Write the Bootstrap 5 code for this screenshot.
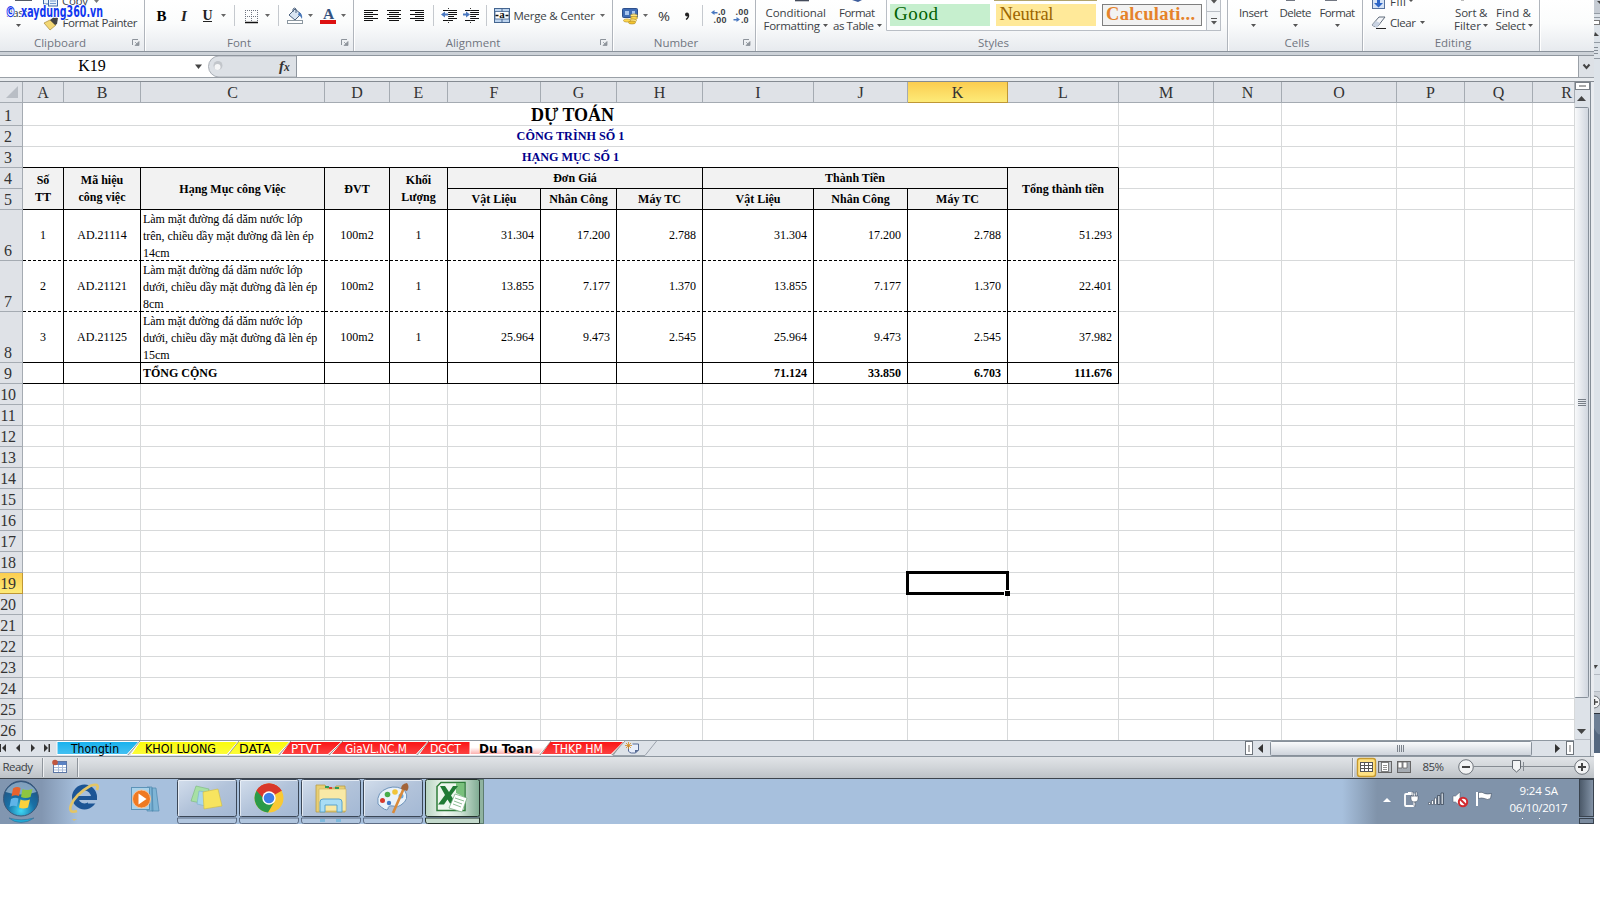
<!DOCTYPE html>
<html lang="vi">
<head>
  <meta charset="UTF-8" />
  <meta name="viewport" content="width=device-width, initial-scale=1.0"/>
  <title>Du Toan - Excel</title>
  <link href="https://cdn.jsdelivr.net/npm/bootstrap@5.3.0/dist/css/bootstrap.min.css" rel="stylesheet">
  <style>
    body { background: #fff; overflow: hidden; font: 11.5px/13px "Open Sans", "Noto Sans", sans-serif; color: #3b3f45; }
    svg { display: block; flex: none; }
    .desk { width: 1600px; height: 824px; }
    .app { width: 1594px; }
    .edge { width: 6px; height: 753px; }

    /* ribbon */
    .ribbon { height: 52px; background: linear-gradient(#fff, #fbfcfc 45%, #e7eaee); border-bottom: 1px solid #8a929b; }
    .rgroup { height: 51px; border-right: 1px solid #b0b5bc; box-shadow: 1px 0 #fff; }
    .rbody { height: 34px; }
    .rlabel { height: 17px; line-height: 17px; color: #70757f; }
    .g-clip { width: 145px; } .g-font { width: 209px; } .g-align { width: 259px; } .g-num { width: 143px; }
    .g-style { width: 472px; } .g-cells { width: 135px; } .g-edit { width: 177px; }
    svg text { font-family: "Open Sans", "Noto Sans", sans-serif; font-size: 11.5px; fill: #3b3f45; }
    svg .serif { font-family: "Liberation Serif", serif; }
    svg .tiny { font: bold 9px "Liberation Sans", sans-serif; }
    svg .brand { font: bold 16px "Liberation Sans Narrow", "DejaVu Sans Condensed", sans-serif; fill: #1238f0; stroke: #fff; stroke-width: 1.6px; paint-order: stroke; }
    svg .tabtxt { font-family: "DejaVu Sans Condensed", "DejaVu Sans", sans-serif; font-size: 12px; }

    /* formula bar */
    .gutter { height: 4px; background: #cdd2d8; border-bottom: 1px solid #8f969e; }
    .formula { height: 22px; border-bottom: 1px solid #9aa0a7; background: #fff; }
    .formula-name { width: 184px; padding-top: 1px; font: 16px/17px "Liberation Serif", serif; color: #000; }
    .formula-btn { width: 16px; background: #dde1e6; border-left: 1px solid #9aa0a7; }
    .gutter2 { height: 4px; background: #e8ebee; border-bottom: 1px solid #858b92; }

    /* sheet */
    .sheet-wrap { height: 659px; }
    .sheet { width: 1575px; table-layout: fixed; border-collapse: separate; border-spacing: 0; font: 12px/17px "Liberation Serif", serif; color: #000; }
    .sheet td, .sheet th { padding: 0; border: 0 solid #d7d9da; border-width: 0 1px 1px 0; vertical-align: middle; font-weight: normal; white-space: nowrap; position: relative; }
    .sheet td { padding-top: 2px; }
    .sheet th { background: #dfe2e7; border-color: #a5abb2; color: #333; font-size: 16px; line-height: 18px; text-align: center; }
    .sheet thead th { padding-top: 2px; }
    .sheet tbody th { vertical-align: bottom; padding-right: 6px; letter-spacing: -.2px; }
    .sheet th.hot { background: linear-gradient(#fbcd50, #fdeb78); border-color: #bf9735; }
    .sheet td.bk { border-color: #000; }
    .sheet td.ubk { border-bottom-color: #000; }
    .sheet td.dash { padding-top: 0; border-bottom: 0; background: repeating-linear-gradient(90deg, #000 0 3px, #fff 3px 5px) bottom / 100% 1px no-repeat; }
    .sheet td.hd { background: #f2f2f2; font-weight: bold; text-align: center; }
    .sheet td.num { text-align: right; padding-right: 6px; }
    .sheet td.mid { text-align: center; }
    .sheet td.wide { padding-top: 0; }
    .desc { height: 50px; padding: 1px 0 0 2px; letter-spacing: -.04px; }
    .total-label { padding-left: 2px; }
    .t1 { font-size: 18px; font-weight: bold; line-height: 20px; padding-left: 4px; }
    .sheet td.t2 { font-size: 12.2px; font-weight: bold; color: #00008b; }
    .pick { position: absolute; inset: -2px; border: 3px solid #000; z-index: 2; }
    .pick::after { content: ""; position: absolute; right: -4px; bottom: -4px; width: 6px; height: 6px; background: #000; border: solid #fff; border-width: 1px 0 0 1px; }
    .vbar { width: 20px; margin-left: -1px; }

    .tabs-bar { height: 17px; }
    .status { height: 22px; }
    .taskbar { height: 45px; }
  </style>
</head>
<body>
  <div class="desk d-flex">
    <div class="app d-flex flex-column">

      <div class="ribbon d-flex overflow-hidden">
        <div class="rgroup g-clip">
          <div class="rbody">
            <svg width="144" height="34" viewBox="0 0 144 34">
              <path d="M15 0h17" stroke="#555a66" stroke-width="2"/>
              <rect x="43.500" y="-4" width="8" height="8" fill="#eaf2fb" stroke="#3d67a8"/>
              <rect x="48.500" y="-3" width="9" height="9" fill="#eaf2fb" stroke="#3d67a8"/>
              <path d="M50 1h6M50 3.500h6" stroke="#6f97cf"/>
              <text x="62" y="5" textLength="26">Copy</text>
              <path d="M94 0h5l-2.500 3z" fill="#777"/>
              <text x="6" y="17" textLength="27">Paste</text>
              <path d="M16 24h5l-2.500 3z" fill="#555"/>
              <path d="M44 23l6-3 6 5-6 5z" fill="#f3d774" stroke="#a88a3a" stroke-width=".7"/>
              <path d="M50 20l4-3 4 1-1 6-2 1z" fill="#444"/>
              <text x="62.500" y="27" textLength="75">Format Painter</text>
              <text class="brand" x="5" y="17" textLength="11" lengthAdjust="spacingAndGlyphs">©</text>
              <text class="brand" x="21" y="17" textLength="82" lengthAdjust="spacingAndGlyphs">xaydung360.vn</text>
            </svg>
          </div>
          <div class="rlabel d-flex"><span class="flex-fill text-center">Clipboard</span><svg width="24" height="17" viewBox="0 0 24 17"><use href="#launch" x="12"/></svg></div>
        </div>
        <div class="rgroup g-font">
          <div class="rbody">
            <svg width="208" height="34" viewBox="145 0 208 34">
              <text class="serif" x="156.500" y="20.500" style="font-size:15px;font-weight:bold;fill:#000">B</text>
              <text class="serif" x="181" y="20.500" style="font-size:15px;font-weight:bold;font-style:italic;fill:#222">I</text>
              <text class="serif" x="202.500" y="20" style="font-size:14px;font-weight:bold;fill:#222">U</text>
              <path d="M203 21.500h9" stroke="#222"/>
              <path d="M221 14h5l-2.500 3zM265 14h5l-2.500 3zM308 14h5l-2.500 3zM341 14h5l-2.500 3z" fill="#666"/>
              <path d="M234.500 5v21M278.500 5v21" stroke="#c5c9ce"/>
              <path d="M245.500 10v12M251.500 10v12M257.500 10v12M245 10.500h13M245 16.500h13" stroke="#6e7480" stroke-dasharray="1 1"/>
              <path d="M245 22.500h13" stroke="#111" stroke-width="1.500"/>
              <path d="M289 15l6-6 6 5-6 6z" fill="#d9e5f2" stroke="#4c627e"/>
              <path d="M293 12v-3q2-2 3 0v4" fill="none" stroke="#4c627e"/>
              <path d="M299 12q4 2 3 7-1-3-4-4z" fill="#4a78b8"/>
              <rect x="287.500" y="20.500" width="15" height="3" fill="#fff" stroke="#8c97a0"/>
              <text class="serif" x="323" y="19" style="font-size:15.500px;font-weight:bold;fill:#33527f">A</text>
              <rect x="320" y="20" width="16" height="4" fill="#dd1111"/>
            </svg>
          </div>
          <div class="rlabel d-flex"><span class="flex-fill text-center">Font</span><svg width="20" height="17" viewBox="0 0 20 17"><use href="#launch" x="8"/></svg></div>
        </div>
        <div class="rgroup g-align">
          <div class="rbody">
            <svg width="258" height="34" viewBox="354 0 258 34">
              <path d="M364 10.500h14M364 12.500h9M364 14.500h14M364 16.500h9M364 18.500h14M364 20.500h9M387 10.500h14M389 12.500h10M387 14.500h14M389 16.500h10M387 18.500h14M389 20.500h10M410 10.500h14M415 12.500h9M410 14.500h14M415 16.500h9M410 18.500h14M415 20.500h9" stroke="#111" stroke-width="1.100"/>
              <path d="M433.500 5v21M486.500 5v21" stroke="#c5c9ce"/>
              <path d="M443 10.500h14M448 12.500h9M448 14.500h9M448 16.500h6M448 18.500h9M443 20.500h10M465 10.500h14M470 12.500h9M470 14.500h9M470 16.500h6M470 18.500h9M465 20.500h10" stroke="#111" stroke-width="1.200"/>
              <path d="M448.500 8v15M470.500 8v15" stroke="#333" stroke-dasharray="1 1"/>
              <path d="M441 14.500l4-3v2h3v2h-3v2zM470 14.500l-4-3v2h-3v2h3v2z" fill="#4a78c0"/>
              <rect x="494.500" y="8.500" width="15" height="14" fill="#bcd3ee" stroke="#44658f"/>
              <path d="M502 8v4M502 19v4" stroke="#44658f"/>
              <rect x="495" y="11.500" width="14" height="7.500" fill="#fff" stroke="#44658f" stroke-width=".8"/>
              <path d="M495.500 15.500h3M505.500 15.500h3" stroke="#111" stroke-width="1.500"/>
              <text x="499.300" y="18" class="serif" style="font-size:11px;font-weight:bold;fill:#111">a</text>
              <text x="513.500" y="20" textLength="81.500">Merge &amp; Center</text>
              <path d="M600 14h5l-2.500 3z" fill="#666"/>
            </svg>
          </div>
          <div class="rlabel d-flex"><span class="flex-fill text-center">Alignment</span><svg width="20" height="17" viewBox="0 0 20 17"><use href="#launch" x="8"/></svg></div>
        </div>
        <div class="rgroup g-num">
          <div class="rbody">
            <svg width="142" height="34" viewBox="613 0 142 34">
              <rect x="622.500" y="8.500" width="15" height="9" rx="1" fill="#3f6cb5" stroke="#2d4f8c"/>
              <path d="M625 11h4v4h-4zM632 11h3v3h-3z" fill="#a9c6ef"/>
              <ellipse cx="634" cy="15.500" rx="3.500" ry="1.600" fill="#ffe680" stroke="#a8862a" stroke-width=".6"/>
              <ellipse cx="634" cy="18" rx="3.500" ry="1.600" fill="#ffd84d" stroke="#a8862a" stroke-width=".6"/>
              <ellipse cx="633" cy="20.500" rx="3.500" ry="1.600" fill="#ffe680" stroke="#a8862a" stroke-width=".6"/>
              <ellipse cx="627" cy="20.500" rx="3.500" ry="1.600" fill="#ffd84d" stroke="#a8862a" stroke-width=".6"/>
              <ellipse cx="632" cy="22.500" rx="3.500" ry="1.500" fill="#f4c430" stroke="#a8862a" stroke-width=".6"/>
              <path d="M643 14h5l-2.500 3z" fill="#666"/>
              <text x="658" y="20.500" textLength="12" lengthAdjust="spacingAndGlyphs" style="font-size:13px;fill:#333">%</text>
              <circle cx="687" cy="14.500" r="2" fill="#222"/><path d="M688.500 14.500q.5 3-2.500 5" stroke="#222" stroke-width="1.300" fill="none"/>
              <path d="M702.500 5v21" stroke="#c5c9ce"/>
              <text class="tiny" x="718" y="15">.0</text><text class="tiny" x="713.500" y="22.500" textLength="13">.00</text>
              <text class="tiny" x="735.500" y="15" textLength="13">.00</text><text class="tiny" x="741" y="22.500">.0</text>
              <path d="M711 12.500l3.500-2.500v2h3v1.500h-3v1.500zM740 19.500l-3.500-2.500v2h-3v1.500h3v1.500z" fill="#4a78c0"/>
            </svg>
          </div>
          <div class="rlabel d-flex"><span class="flex-fill text-center ps-1">Number</span><svg width="20" height="17" viewBox="0 0 20 17"><use href="#launch" x="8"/></svg></div>
        </div>
        <div class="rgroup g-style">
          <div class="rbody">
            <svg width="471" height="34" viewBox="756 0 471 34">
              <rect x="795" y="0" width="14" height="1.300" fill="#444b5a"/><path d="M852 0h10l-4 2z" fill="#3d5c9c"/>
              <text x="765.500" y="17" textLength="60.500">Conditional</text>
              <text x="763.500" y="30" textLength="56.500">Formatting</text>
              <text x="839" y="17" textLength="36">Format</text>
              <text x="833" y="30" textLength="41">as Table</text>
              <path d="M823 24h5l-2.500 3zM877 24h5l-2.500 3z" fill="#555"/>
              <path d="M886.500 0v30.500h334v-30.500" fill="#fff" stroke="#b9bec5"/>
              <path d="M994 .5h103" stroke="#b0a36c"/>
              <rect x="890" y="4" width="100" height="22" fill="#c6efce"/>
              <rect x="996" y="4" width="100" height="22" fill="#ffe999"/>
              <rect x="1102.500" y="4.500" width="99" height="21" fill="#f2f2f2" stroke="#7f7f7f"/>
              <text class="serif" x="894" y="19.500" textLength="44" style="font-size:19px;fill:#006100">Good</text>
              <text class="serif" x="999.500" y="19.500" textLength="54" style="font-size:18.500px;fill:#9c6500">Neutral</text>
              <text class="serif" x="1106" y="19.500" textLength="89" style="font-size:18.500px;font-weight:bold;fill:#e5822a">Calculati...</text>
              <rect x="1206.500" y="-1" width="14" height="12.500" fill="#f3f5f7" stroke="#b9bec5"/>
              <rect x="1206.500" y="11.500" width="14" height="19" fill="#f3f5f7" stroke="#b9bec5"/>
              <path d="M1211 0h6l-3 3.500zM1211 21h6l-3 3.500z" fill="#555"/><path d="M1211 18.500h6" stroke="#555"/>
            </svg>
          </div>
          <div class="rlabel text-center ps-1">Styles</div>
        </div>
        <div class="rgroup g-cells">
          <div class="rbody">
            <svg width="134" height="34" viewBox="1228 0 134 34">
              <path d="M1286 0h9M1325 0h12" stroke="#444b5a" stroke-width="1.500"/>
              <text x="1239" y="17" textLength="29">Insert</text>
              <text x="1279.500" y="17" textLength="32">Delete</text>
              <text x="1319.500" y="17" textLength="35.500">Format</text>
              <path d="M1251 24h5l-2.500 3zM1293 24h5l-2.500 3zM1335 24h5l-2.500 3z" fill="#555"/>
            </svg>
          </div>
          <div class="rlabel text-center ps-1">Cells</div>
        </div>
        <div class="rgroup g-edit">
          <div class="rbody">
            <svg width="176" height="34" viewBox="1363 0 176 34">
              <rect x="1372.500" y="-4" width="12" height="12.500" fill="#d5e3f6" stroke="#55729f"/>
              <path d="M1377 0h3v3h3l-4.500 4.500-4.500-4.500h3z" fill="#2d66c8"/>
              <text x="1390" y="6" textLength="16">Fill</text><path d="M1409 0h4l-2 2z" fill="#555"/>
              <path d="M1372 25l7-8h6l-7 9q-3 2-6-1z" fill="#f4f6f9" stroke="#5f6b7a"/><path d="M1372 25l4-4 4 2-3 5z" fill="#c9d3e2"/>
              <path d="M1376 28.500h10" stroke="#222"/>
              <text x="1390" y="27" textLength="26">Clear</text><path d="M1420 21h5l-2.500 3z" fill="#555"/>
              <path d="M1461 0h3" stroke="#777"/>
              <text x="1455" y="17" textLength="32.500">Sort &amp;</text><text x="1454" y="30" textLength="27">Filter</text><path d="M1483 24h5l-2.500 3z" fill="#555"/>
              <text x="1496" y="17" textLength="35">Find &amp;</text><text x="1495.500" y="30" textLength="30">Select</text><path d="M1528 24h5l-2.500 3z" fill="#555"/>
            </svg>
          </div>
          <div class="rlabel text-center ps-1">Editing</div>
        </div>
      </div>
      <div class="gutter"></div>

      <div class="formula d-flex">
        <div class="formula-name text-center">K19</div>
        <svg width="113" height="21" viewBox="184 56 113 21">
          <path d="M195 64.500h7l-3.500 4.500z" fill="#444"/>
          <path d="M297 56h-78a10.500 10.500 0 0 0 0 21h78z" fill="#dde1e6" stroke="#a9aeb5"/>
          <circle cx="218" cy="65.500" r="4.500" fill="#c2c6cb"/><circle cx="217.500" cy="67" r="3" fill="#f5f6f7"/>
          <text class="serif" x="279" y="71" style="font-size:15px;font-style:italic;font-weight:bold;fill:#333">f</text>
          <text class="serif" x="284" y="71" style="font-size:11.500px;font-style:italic;font-weight:bold;fill:#333">x</text>
          <path d="M296.500 56v21" stroke="#8f969e"/>
        </svg>
        <div class="flex-fill"></div>
        <div class="formula-btn">
          <svg width="15" height="21" viewBox="0 0 15 21"><path d="M4.500 8.500l3 3.500 3-3.500" fill="none" stroke="#444" stroke-width="2"/></svg>
        </div>
      </div>
      <div class="gutter2"></div>

      <div class="sheet-wrap d-flex overflow-hidden">
        <table class="sheet flex-shrink-0">
          <colgroup id="cols"></colgroup>
          <thead><tr id="colHeads"></tr></thead>
          <tbody id="rows"></tbody>
        </table>
        <svg class="vbar" width="20" height="659" viewBox="1574 82 20 659">
          <defs>
            <linearGradient id="vg"><stop offset="0" stop-color="#fafbfc"/><stop offset="1" stop-color="#cfd5de"/></linearGradient>
          </defs>
          <rect x="1574" y="82" width="20" height="659" fill="#dde2e8"/>
          <rect x="1575.500" y="82.500" width="14" height="7" fill="#fff" stroke="#7a8087"/><path d="M1579 86h7" stroke="#555"/>
          <path d="M1577 101h9l-4.500-5z" fill="#444"/>
          <rect x="1574.500" y="107.500" width="14" height="590" rx="1" fill="url(#vg)" stroke="#87909a"/>
          <path d="M1578 399.500h8M1578 401.500h8M1578 403.500h8M1578 405.500h8" stroke="#777e87"/>
          <path d="M1577 729h9l-4.500 5z" fill="#444"/>
          <path d="M1574 739.500h16" stroke="#b7bcc3"/>
          <path d="M1590.500 82v659" stroke="#858e97"/><rect x="1591" y="82" width="3" height="659" fill="#e9ecf0"/>
        </svg>
      </div>

      <div class="tabs-bar d-flex">
        <svg id="tabs" width="660" height="17" viewBox="0 740 660 17"></svg>
        <svg width="934" height="17" viewBox="660 740 934 17">
          <defs><linearGradient id="hg" x2="0" y2="1"><stop offset="0" stop-color="#fbfcfd"/><stop offset="1" stop-color="#ccd2da"/></linearGradient></defs>
          <rect x="660" y="740" width="934" height="17" fill="#dde2e8"/>
          <path d="M660 740.500h914M660 756.500h934" stroke="#8f98a1"/>
          <rect x="1245.500" y="741.500" width="7" height="13" fill="#fff" stroke="#6e757c"/><path d="M1249 745v7" stroke="#666"/>
          <path d="M1263 744v9l-5-4.500z" fill="#333"/>
          <rect x="1270.500" y="741.500" width="261" height="14" rx="1" fill="url(#hg)" stroke="#87909a"/>
          <path d="M1397.500 745v7M1399.500 745v7M1401.500 745v7M1403.500 745v7" stroke="#7c838c"/>
          <path d="M1555 744v9l5-4.500z" fill="#333"/>
          <rect x="1566.500" y="741.500" width="7" height="13" fill="#fff" stroke="#6e757c"/><path d="M1570 745v7" stroke="#666"/>
          <path d="M1590.500 740v17" stroke="#858e97"/>
        </svg>
      </div>

      <div class="status">
        <svg width="1594" height="22" viewBox="0 757 1594 22">
          <defs><linearGradient id="sg" x2="0" y2="1"><stop offset="0" stop-color="#e1e4e7"/><stop offset=".5" stop-color="#d0d4d8"/><stop offset="1" stop-color="#bbc0c5"/></linearGradient></defs>
          <rect x="0" y="757" width="1594" height="22" fill="url(#sg)"/>
          <text x="2.500" y="771" textLength="30.500">Ready</text>
          <path d="M42.500 758v19M77.500 758v19M1352.500 758v19" stroke="#8f959c"/><path d="M43.500 758v19M78.500 758v19M1353.500 758v19" stroke="#eef0f2"/>
          <rect x="53.500" y="761.500" width="13" height="11" fill="#fff" stroke="#5b76a5"/><rect x="54" y="762" width="12" height="3" fill="#5a82c4"/>
          <path d="M54 767.500h12M54 770h12M58.500 765v7M62.500 765v7" stroke="#a9bcd9"/><circle cx="55" cy="762.500" r="2.800" fill="#c0563f"/>
          <rect x="1357.500" y="758.500" width="18" height="18" rx="2.500" fill="#ffe283" stroke="#c79a2e" stroke-width="1.400"/>
          <rect x="1360.500" y="762.500" width="12" height="9" fill="#fff" stroke="#555"/><path d="M1361 765.500h12M1361 768.500h12M1364.500 763v9M1368.500 763v9" stroke="#555"/>
          <rect x="1378.500" y="761.500" width="13" height="11" fill="#bfc4ca" stroke="#666"/><rect x="1381.500" y="762.500" width="7" height="9" fill="#fff" stroke="#666" stroke-width=".8"/><path d="M1383 765.500h4M1383 767.500h4M1383 769.500h4" stroke="#777" stroke-width=".8"/>
          <rect x="1397.500" y="761.500" width="13" height="11" fill="#a5abb2" stroke="#666"/><path d="M1398 762h4v6h-4zM1403 762h4v6h-4z" fill="#fff" stroke="#666" stroke-width=".8"/>
          <text x="1422.500" y="771" textLength="21.500">85%</text>
          <path d="M1474 766.500h100M1523.500 762v9" stroke="#868c93"/>
          <circle cx="1466" cy="767" r="7.300" fill="#f2f3f4" stroke="#6c7279"/><path d="M1462 767h8" stroke="#444" stroke-width="2"/>
          <circle cx="1582" cy="767" r="7.300" fill="#f2f3f4" stroke="#6c7279"/><path d="M1578 767h8M1582 763v8" stroke="#444" stroke-width="2"/>
          <path d="M1512.500 760.500h8v8l-4 3.500-4-3.500z" fill="#f3f4f5" stroke="#60666d"/>
          <path d="M0 778.500h1594" stroke="#3d444d"/>
        </svg>
      </div>

      <div class="taskbar">
        <svg width="1594" height="45" viewBox="0 779 1594 45">
          <defs>
            <linearGradient id="tb" gradientUnits="userSpaceOnUse" x1="0" x2="1594" y1="0" y2="0">
              <stop offset="0" stop-color="#8196b0"/><stop offset=".026" stop-color="#8296b1"/><stop offset=".049" stop-color="#a7c0dd"/>
              <stop offset=".842" stop-color="#a7c0dd"/><stop offset=".864" stop-color="#8093aa"/><stop offset="1" stop-color="#8093aa"/>
            </linearGradient>
            <linearGradient id="bt" x2="1" y2="1"><stop offset="0" stop-color="#d3deec"/><stop offset=".5" stop-color="#b2c3da"/><stop offset="1" stop-color="#a3b8d4"/></linearGradient>
            <linearGradient id="xl" x2="1" y2="0"><stop offset="0" stop-color="#b9d5c2"/><stop offset=".35" stop-color="#eef6ef"/><stop offset=".65" stop-color="#cfe3d6"/><stop offset="1" stop-color="#7fab92"/></linearGradient>
            <radialGradient id="orb" cx=".5" cy=".85" r=".85"><stop offset="0" stop-color="#3fd8f4"/><stop offset=".45" stop-color="#1870a6"/><stop offset="1" stop-color="#264d78"/></radialGradient>
            <linearGradient id="sd"><stop offset="0" stop-color="#4a5868"/><stop offset="1" stop-color="#8494a8"/></linearGradient>
          </defs>
          <rect x="0" y="779" width="1594" height="45" fill="url(#tb)"/>
          <!-- start orb -->
          <circle cx="21" cy="798.500" r="17.500" fill="url(#orb)" stroke="#3c5878"/>
          <path d="M5.500 792a17 17 0 0 1 31 0q-15 5-31 0z" fill="#cfe0ee" opacity=".55"/>
          <path d="M13 788.500q4-2.500 7.500-.5l-1.500 8q-4-1.500-7.500.5z" fill="#e8622c"/>
          <path d="M22.500 789q4 2 10 0l-2 8q-5 2-9.500 0z" fill="#8ec63f"/>
          <path d="M11 799q4-2 7.500-.5l-1.500 8q-4-1.500-7.500.5z" fill="#5fb4e8"/>
          <path d="M20.500 799.500q4 2 9.500 0l-2 8q-5 2-9 0z" fill="#fbd13c"/>
          <path d="M9 818q12 3.500 25 0-6 4.500-13 4.500t-12-4.500z" fill="#20a9d6" stroke="#3c6c90" stroke-width=".6"/>
          <!-- internet explorer -->
          <circle cx="84.500" cy="797" r="9.500" fill="none" stroke="#1c5595" stroke-width="6"/>
          <path d="M76 796h21v4h-21z" fill="#1c5595"/><path d="M88 800h12v3.500h-12z" fill="#a7c0dd"/>
          <path d="M80.500 795q4-4.500 8 0z" fill="#a7c0dd"/>
          <path d="M97 790q3-8-7-4-14 8-19 19-3 9 6 6" fill="none" stroke="#e3c566" stroke-width="2.600"/>
          <path d="M72 819h5l-3 2z" fill="#d5c07a"/>
          <!-- media player -->
          <path d="M152 788h4l3 23h-7zM147 787h5l1 24h-6z" fill="#7fb5d6" stroke="#4d87ad" stroke-width=".7"/>
          <rect x="131.500" y="787.500" width="18" height="22" fill="#a9d2ea" stroke="#5c93b8"/>
          <circle cx="141.500" cy="799" r="9" fill="#ef7a22" stroke="#f6c49a"/><path d="M138.500 793.500v11l8-5.500z" fill="#fff"/>
          <!-- running apps -->
          <g fill="url(#bt)" stroke="#3b4757">
            <rect x="177.500" y="779.500" width="59" height="37" rx="2"/><rect x="239.500" y="779.500" width="59" height="37" rx="2"/>
            <rect x="301.500" y="779.500" width="59" height="37" rx="2"/><rect x="363.500" y="779.500" width="59" height="37" rx="2"/>
          </g>
          <path d="M177.500 818v3q0 2.500 2 2.500h55q2 0 2-2.500v-3zM239.500 818v3q0 2.500 2 2.500h55q2 0 2-2.500v-3zM301.500 818v3q0 2.500 2 2.500h55q2 0 2-2.500v-3zM363.500 818v3q0 2.500 2 2.500h55q2 0 2-2.500v-3z" fill="#b1c6df" stroke="#55637a" stroke-width=".9"/>
          <path d="M178.500 816v-35.500h57M240.500 816v-35.500h57M302.500 816v-35.500h57M364.500 816v-35.500h57" fill="none" stroke="#eef3f9" opacity=".8"/>
          <rect x="479.500" y="779.500" width="4" height="44" fill="#8fb39f" stroke="#5d7d70"/>
          <rect x="425.500" y="779.500" width="54" height="37" rx="2" fill="url(#xl)" stroke="#25332c"/>
          <path d="M425.500 818v3q0 2.500 2 2.500h52v-5.500z" fill="#c4dacd" stroke="#25332c"/>
          <!-- sticky notes -->
          <path d="M196 786l13 3-3 15-15-3z" fill="#a7e0a5" stroke="#78b878" stroke-width=".6"/>
          <path d="M199 791l14 2-3 14-13-3z" fill="#a8d6ee" stroke="#7ab0cc" stroke-width=".6"/>
          <path d="M203 792l15-3 4 17-18 3z" fill="#f7e45f" stroke="#cdbb45" stroke-width=".6"/>
          <!-- chrome -->
          <circle cx="269" cy="798" r="14.500" fill="#f9c934"/>
          <path d="M269 798l-12.500-7.300a14.500 14.500 0 0 1 25.100 0z" fill="#d9382b"/>
          <path d="M269 791h12.700a14.500 14.500 0 0 0-25.200-.3l6.500 10.500z" fill="#d9382b"/>
          <path d="M256.500 790.700a14.500 14.500 0 0 0 11.500 21.800l6.500-11-5.500 3z" fill="#2b9a48"/>
          <circle cx="269" cy="798" r="6.700" fill="#fff"/><circle cx="269" cy="798" r="5.300" fill="#3c7ee8"/>
          <!-- explorer -->
          <path d="M316 785h9l2 3h8l1-2h9v26h-29z" fill="#e8cf74" stroke="#b89c48" stroke-width=".8"/>
          <path d="M319 789h27v22h-27z" fill="#f8e9a6" stroke="#c9b060" stroke-width=".6"/>
          <path d="M325 787h4M335 788h4" stroke="#2e9a58" stroke-width="2"/><path d="M329 788h3" stroke="#d8452f" stroke-width="2"/>
          <path d="M320 812v-10q0-3 3-3h16q3 0 3 3v10h-5v-7h-12v7z" fill="#a9ddf5" stroke="#5ba3cb"/>
          <path d="M320 819h5v3h-5zM336 819h5v3h-5z" fill="#7fb9dc"/>
          <!-- paint -->
          <path d="M378 804q-2-12 10-16 10-3 17 3 5 8-4 14-3 3-8 1-5-1-5 3-2 3-10-5z" fill="#eaf2fa" stroke="#6d93ba"/>
          <circle cx="382.500" cy="800.500" r="2.500" fill="#d8392d"/><circle cx="387.500" cy="794.500" r="2.800" fill="#49ac4a"/><circle cx="395" cy="792" r="2.800" fill="#f1c53a"/><circle cx="401" cy="796" r="2.500" fill="#67a8e0"/><circle cx="389" cy="803" r="2.200" fill="#3f79c8"/>
          <path d="M404 788l-11 25" stroke="#d98a3a" stroke-width="2.600"/><path d="M401 789q0-5 6-6 3 4 0 8z" fill="#a2643a"/>
          <!-- excel -->
          <path d="M441 782.500h24v28h-28v-24z" fill="#eef7ee" stroke="#2f7d3a" stroke-width="1.500"/>
          <path d="M456 783h8v14l-8-4z" fill="#79c07c"/>
          <path d="M440 786h5l4 6 4-6h5l-7 9.500 5 8h-6l-2.500-4-3.500 5h-6l7-9.500z" fill="#217a35"/>
          <path d="M455 794l12 4-5 14-13-4z" fill="#fff" stroke="#6fa77a" stroke-width=".7"/><path d="M455 798l9 3M454 801l8 3M453 804l8 3" stroke="#8dbd95"/>
          <!-- tray -->
          <path d="M1383 802h8l-4-4z" fill="#fff"/>
          <rect x="1405" y="794" width="9" height="12" rx="1" fill="#7f8fa4" stroke="#fff" stroke-width="1.800"/><path d="M1408 792h4v2h-4z" fill="#fff"/>
          <path d="M1411 796h7v3q0 3-3.500 3t-3.500-3zM1412 792h1.500v4h-1.500zM1415.500 792h1.500v4h-1.500zM1414 802h1.500v4h-1.500z" fill="#fff" stroke="#3c4a5c" stroke-width=".5"/>
          <path d="M1428.500 802.500h2v2h-2zM1431.500 800.500h2v4h-2zM1434.500 798h2v6.500h-2z" fill="#fff" stroke="#3c4a5c" stroke-width=".6"/>
          <path d="M1437.500 795.500h2.500v9h-2.500zM1441 793h2.500v11.500h-2.500z" fill="#c3cbd4" stroke="#3c4a5c" stroke-width=".8"/>
          <path d="M1453 796h2.500l4.500-4v14l-4.500-4h-2.500z" fill="#fff" stroke="#4c596a" stroke-width=".5"/>
          <circle cx="1463" cy="802" r="4.200" fill="#fff" stroke="#d22a2f" stroke-width="2"/><path d="M1460 799l6 6" stroke="#d22a2f" stroke-width="2"/>
          <path d="M1477 792v14" stroke="#fff" stroke-width="2"/><path d="M1478.500 792.500q4-1 6 1 3 1 7 0l-1 5q-3 2-6 0-3-1-6 0z" fill="#fff" stroke="#3c4a5c" stroke-width=".6"/>
          <text x="1519.500" y="795" textLength="38.500" style="fill:#fff">9:24 SA</text>
          <text x="1509.500" y="811.500" textLength="58" style="fill:#fff">06/10/2017</text>
          <path d="M1522 818h1v1h-1zM1539 818h1v1h-1z" fill="#fff"/>
          <rect x="1579.500" y="779.500" width="14" height="37" fill="url(#sd)" stroke="#39434f"/><rect x="1579.500" y="818.500" width="14" height="5" fill="#7b8b9f" stroke="#39434f"/>
        </svg>
      </div>
    </div>

    <svg class="edge" width="6" height="753" viewBox="1594 0 6 753">
      <rect x="1594" y="0" width="6" height="753" fill="#dde3e9"/>
      <rect x="1594" y="0" width="6" height="13" fill="#c6ccd4"/><path d="M1597 1l3 3v-3z" fill="#444"/>
      <path d="M1594 13.500h6M1594 17.500h6M1594 42.500h6M1594 58.500h6" stroke="#939ba4"/>
      <rect x="1593.500" y="20.500" width="6" height="4" fill="#fff" stroke="#777"/><path d="M1594 36h5l-4-4z" fill="#444"/>
      <path d="M1594 47.500h4M1594 50.500h4M1594 53.500h4" stroke="#848c95"/>
      <path d="M1594 665h4l-3 4z" fill="#444"/><path d="M1594 674.500h6M1594 691.500h6" stroke="#b4bac2"/>
      <rect x="1594" y="692" width="6" height="21" fill="#cdd2d8"/><circle cx="1594" cy="702" r="6" fill="#f2f3f4" stroke="#6c7279"/><path d="M1594 702h4M1594.500 699v6" stroke="#444" stroke-width="1.500"/>
      <rect x="1594" y="713" width="6" height="40" fill="#6d7f95"/><path d="M1594 713.500h6" stroke="#2c333c"/><path d="M1594 728q4 8 6 6v19h-6z" fill="#54677f"/>
    </svg>
  </div>

  <svg width="0" height="0">
    <symbol id="launch" width="8" height="17" viewBox="0 0 8 17"><path d="M.5 11V5.500H6" fill="none" stroke="#8d939b"/><path d="M3 8l3 3M7 7.500v4h-4z" stroke="#8d939b" fill="#8d939b" stroke-width=".8"/></symbol>
  </svg>

  <script src="https://cdn.jsdelivr.net/npm/bootstrap@5.3.0/dist/js/bootstrap.bundle.min.js"></script>
  <script>
    const widths = [41, 77, 184, 65, 58, 93, 76, 86, 111, 94, 100, 111, 95, 68, 115, 68, 68, 42];
    const letters = 'ABCDEFGHIJKLMNOPQR'.split('');
    const items = [
      ['1', 'AD.21114', 'Làm mặt đường đá dăm nước lớp<br>trên, chiều dầy mặt đường đã lèn ép<br>14cm', '100m2', '1', '31.304', '17.200', '2.788', '31.304', '17.200', '2.788', '51.293'],
      ['2', 'AD.21121', 'Làm mặt đường đá dăm nước lớp<br>dưới, chiều dầy mặt đường đã lèn ép<br>8cm', '100m2', '1', '13.855', '7.177', '1.370', '13.855', '7.177', '1.370', '22.401'],
      ['3', 'AD.21125', 'Làm mặt đường đá dăm nước lớp<br>dưới, chiều dầy mặt đường đã lèn ép<br>15cm', '100m2', '1', '25.964', '9.473', '2.545', '25.964', '9.473', '2.545', '37.982']
    ];
    const totals = ['', '', 'TỔNG CỘNG', '', '', '', '', '', '71.124', '33.850', '6.703', '111.676'];

    document.getElementById('cols').innerHTML = '<col style="width:23px">' + widths.map(w => `<col style="width:${w}px">`).join('');
    document.getElementById('colHeads').innerHTML =
      '<th style="height:21px"><svg width="22" height="18"><path d="M18 2v12H6z" fill="#b9bec5"/></svg></th>' +
      letters.map(l => `<th class="${l === 'K' ? 'hot' : ''}${l === 'R' ? ' text-end' : ''}"${l === 'R' ? ' style="padding-right:2px"' : ''}>${l}</th>`).join('');

    const rows = document.getElementById('rows');
    const blanks = n => '<td></td>'.repeat(n);
    function addRow(n, height, cells) {
      rows.insertAdjacentHTML('beforeend', `<tr style="height:${height}px"><th class="${n === 19 ? 'hot' : ''}">${n}</th>${cells}</tr>`);
    }
    const hd = (text, attrs) => `<td class="bk hd" ${attrs || ''}>${text}</td>`;

    addRow(1, 23, '<td colspan="12" class="mid"><div class="t1">DỰ TOÁN</div></td>' + blanks(6));
    addRow(2, 21, '<td colspan="12" class="mid t2">CÔNG TRÌNH SỐ 1</td>' + blanks(6));
    addRow(3, 21, '<td colspan="12" class="mid t2 ubk">HẠNG MỤC SỐ 1</td>' + blanks(6));
    addRow(4, 21, hd('Số<br>TT', 'rowspan="2"') + hd('Mã hiệu<br>công việc', 'rowspan="2"') + hd('Hạng Mục công Việc', 'rowspan="2"') +
      hd('ĐVT', 'rowspan="2"') + hd('Khối<br>Lượng', 'rowspan="2"') + hd('Đơn Giá', 'colspan="3"') + hd('Thành Tiền', 'colspan="3"') +
      hd('Tổng thành tiền', 'rowspan="2"') + blanks(6));
    addRow(5, 21, ['Vật Liệu', 'Nhân Công', 'Máy TC', 'Vật Liệu', 'Nhân Công', 'Máy TC'].map(t => hd(t)).join('') + blanks(6));
    items.forEach((item, i) => {
      const cells = item.map((v, c) => {
        const cls = 'bk' + (i < 2 ? ' dash' : '') + (c > 4 ? ' num' : c === 2 ? ' wide' : ' mid');
        return `<td class="${cls}">${c === 2 ? `<div class="desc">${v}</div>` : v}</td>`;
      }).join('');
      addRow(6 + i, 51, cells + blanks(6));
    });
    addRow(9, 21, totals.map((v, c) => `<td class="bk fw-bold ${c > 4 ? 'num' : ''}">${c === 2 ? `<div class="total-label">${v}</div>` : v}</td>`).join('') + blanks(6));
    for (let n = 10; n <= 26; n++) {
      addRow(n, 21, n === 19 ? blanks(10) + '<td><div class="pick"></div></td>' + blanks(7) : blanks(18));
    }

    // sheet tabs: label, fill, text colour, left bottom, left top, right top, right bottom, text x, text width
    const tabs = [
      ['THKP HM', '#fb1414', '#fff', 541, 550, 624, 611, 553, 50],
      ['DGCT', '#fb1414', '#fff', 419, 428, 480, 470, 430, 31],
      ['GiaVL.NC.M', '#fb1414', '#fff', 331, 342, 428, 416, 345, 62],
      ['PTVT', '#fb1414', '#fff', 281, 290, 342, 328, 291, 30],
      ['DATA', '#fbfb0a', '#000', 228, 238, 290, 278, 239, 32],
      ['KHOI LUONG', '#fbfb0a', '#000', 131, 140, 238, 227, 145, 71],
      ['Thongtin', '#17b1ee', '#000', 57, 57, 139, 127, 71, 48],
      ['Du Toan', 'url(#active)', '#000', 470, 470, 550, 539, 479, 54]
    ];
    let out = `<defs><linearGradient id="active" x2="0" y2="1"><stop offset="0" stop-color="#fff"/><stop offset=".45" stop-color="#fff"/><stop offset="1" stop-color="#fbaaa8"/></linearGradient>
      <linearGradient id="shine" x2="0" y2="1"><stop offset="0" stop-color="#fff" stop-opacity="0"/><stop offset="1" stop-color="#fff" stop-opacity=".2"/></linearGradient></defs>
      <rect x="0" y="740" width="660" height="17" fill="#dde2e8"/>
      <path d="M0 740.500h660M0 756.500h660" stroke="#8f98a1"/>
      <path d="M0 744h1v8H0zM6 744v8l-4-4zM20 744v8l-4-4zM31 744v8l4-4zM44 744v8l4-4zM48.500 744h1.500v8h-1.500z" fill="#333"/>
      <path d="M613 755.500l10-14M645 755.500l12-15M613 755.500h32" stroke="#9aa2ab" fill="none"/>
      <path d="M628.500 746v5q1 2 3 2h4l3-3v-6h-6" fill="#e8eefb" stroke="#566a94"/><path d="M635 753v-3h4z" fill="#566a94"/>
      <path d="M628.500 742v7M625 745.500h7M626 743l5 5M631 743l-5 5" stroke="#d48a1e" stroke-width=".8"/>`;
    tabs.forEach(([label, fill, color, lb, lt, rt, rb, tx, tw]) => {
      const shape = `M${lb} 754.500L${lt} 741.500H${rt}L${rb} 754.500z`;
      const bold = label === 'Du Toan';
      out += `<path d="${shape}" fill="${fill}" stroke="#fff"/>` + (bold ? '' : `<path d="${shape}" fill="url(#shine)"/>`) +
        `<path d="M${rt + 1} 741L${rb + 1} 755" stroke="#8c8c80" stroke-width=".8"/>` +
        `<text class="tabtxt" x="${tx}" y="753" textLength="${tw}" lengthAdjust="spacingAndGlyphs" style="fill:${color}${bold ? ';font-weight:bold' : ''}">${label}</text>`;
    });
    document.getElementById('tabs').innerHTML = out;
  </script>
</body>
</html>
